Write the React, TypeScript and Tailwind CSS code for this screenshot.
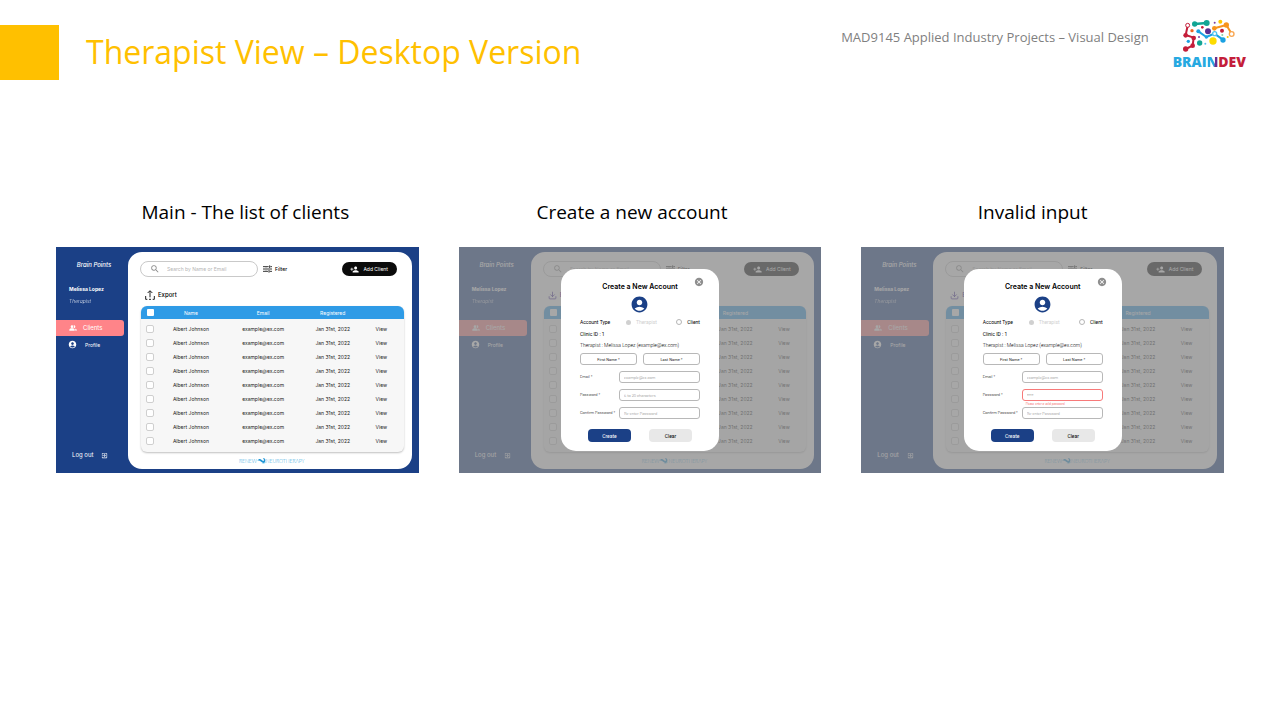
import { useId } from "react";
import {
  MdSearch,
  MdPeopleAlt,
  MdAccountCircle,
  MdExitToApp,
  MdPersonAddAlt1,
  MdCancel,
} from "react-icons/md";
import { LuDownload } from "react-icons/lu";

type ScreenKind = "main" | "create" | "invalid";

const clients = Array.from({ length: 9 }, (_, i) => ({
  id: i + 1,
  name: "Albert Johnson",
  email: "example@ex.com",
  registered: "Jan 31st, 2022",
}));

function BrainLogo() {
  return (
    <div className="mt-px flex flex-col items-center gap-0.5">
      <svg viewBox="0 0 156 102" className="h-[34px] w-[52px]" aria-hidden="true">
        <g fill="none" strokeLinecap="round" strokeLinejoin="round">
          <path d="M14 20 L8 48 L32 56 L29 80 L8 90" stroke="#c41e3a" strokeWidth="6" />
          <path d="M36 15 L70 12" stroke="#12a594" strokeWidth="7" />
          <path d="M94 28 L130 18 L146 44" stroke="#f7941e" strokeWidth="6" />
          <path d="M46 37 L70 54 L94 44 L120 62" stroke="#1ba1e2" strokeWidth="6" />
        </g>
        <circle cx="14" cy="19" r="6" fill="#fff" stroke="#c41e3a" strokeWidth="3" />
        <circle cx="8" cy="49" r="7" fill="#c41e3a" />
        <circle cx="32" cy="57" r="7" fill="#c41e3a" />
        <circle cx="29" cy="80" r="7" fill="#c41e3a" />
        <circle cx="8" cy="90" r="8" fill="#c41e3a" />
        <circle cx="35" cy="15" r="8" fill="#12a594" />
        <circle cx="71" cy="12" r="9" fill="#12a594" />
        <circle cx="94" cy="28" r="7" fill="#f7941e" />
        <circle cx="130" cy="18" r="8" fill="#f7941e" />
        <circle cx="146" cy="45" r="7" fill="#fff" stroke="#f9a650" strokeWidth="4" />
        <circle cx="46" cy="37" r="6" fill="#1ba1e2" />
        <circle cx="70" cy="54" r="5" fill="#1ba1e2" />
        <circle cx="95" cy="44" r="6" fill="#fff" stroke="#4ec3f0" strokeWidth="4" />
        <circle cx="120" cy="63" r="8" fill="#1ba1e2" />
        <circle cx="75" cy="37" r="9" fill="#592d91" />
        <circle cx="90" cy="66" r="11" fill="#fddc00" />
        <circle cx="112" cy="8" r="6" fill="#fdc700" />
        <circle cx="95" cy="11" r="3" fill="#7b3fa0" />
        <circle cx="117" cy="35" r="6" fill="#c41e3a" />
        <circle cx="58" cy="25" r="4" fill="#c41e3a" />
        <circle cx="27" cy="35" r="5" fill="#f26522" />
        <circle cx="16" cy="67" r="5" fill="#1ba1e2" />
        <circle cx="50" cy="72" r="8" fill="#12a594" />
        <circle cx="67" cy="74" r="3" fill="#4ec3f0" />
        <circle cx="48" cy="54" r="3" fill="#7b3fa0" />
        <circle cx="118" cy="48" r="3" fill="#8bd0a5" />
        <circle cx="134" cy="54" r="3" fill="#fdc700" />
      </svg>
      <div className="font-['Open_Sans',sans-serif] text-[14px] leading-[14px] font-extrabold whitespace-nowrap">
        <span className="text-[#27a9e1]">BRAI</span>
        <span className="bg-linear-to-r from-[#27a9e1] from-60% to-[#662d91] to-75% bg-clip-text text-transparent">
          N
        </span>
        <span className="text-[#c41e3a]">DEV</span>
      </div>
    </div>
  );
}

function FilterIcon() {
  return (
    <svg viewBox="0 0 27 24" className="h-2 w-[9px]" fill="none" stroke="currentColor" strokeWidth="2.4" aria-hidden="true">
      <path d="M0 5h17M22 5h5M20 1v8M0 12h6M12 12h15M9 8v8M0 19h15M20 19h7M18 15v8" />
    </svg>
  );
}

function ExportIcon() {
  return (
    <svg viewBox="0 0 30 30" className="h-[10px] w-[10px]" fill="none" stroke="currentColor" strokeWidth="2.6" aria-hidden="true">
      <path d="M15 22V3M8 9l7-7 7 7M2 18v10h5M28 18v10h-5M12 28h6" />
    </svg>
  );
}

function RenewLogo() {
  return (
    <div className="flex items-center justify-center pl-1 font-['Lato',sans-serif] text-[5px] leading-[6px] font-light text-[#2ba3dc]">
      <span>RENEW</span>
      <svg viewBox="0 0 30 21" className="h-[7px] w-[9px]" aria-hidden="true">
        <path d="M1 11C7 2 12 5 17 10c3 3 6 3 6-1 0-3-2-4-4-4 5-4 10 0 9 6-1 8-8 10-14 4-4-4-8-6-13-4z" fill="#2196d6" />
        <path d="M13 18c6 2 12 1 15-4v5c-4 2-11 2-15-1z" fill="#5cc3ee" />
      </svg>
      <span>NEUROTHERAPY</span>
    </div>
  );
}

function Sidebar() {
  return (
    <aside className="flex w-[72px] shrink-0 flex-col bg-[#1b4086] py-[14px] text-white">
      <p className="pl-1 text-center text-[6px] leading-[8px] font-medium italic">Brain Points</p>
      <div className="mt-4 pl-[13px]">
        <p className="text-[5px] leading-[8px] font-bold">Melissa Lopez</p>
        <p className="mt-1 text-[5px] leading-[8px] font-light italic opacity-80">Therapist</p>
      </div>
      <nav className="mt-[15px] mr-1 flex flex-col gap-1 text-[6px] leading-[8px]">
        <a href="#clients" className="flex h-4 items-center gap-[6px] rounded-r-[3px] bg-[#ff8489] pl-[13px]">
          <MdPeopleAlt className="size-2" />
          Clients
        </a>
        <a href="#profile" className="flex items-center gap-2 pl-3 text-[5px]">
          <MdAccountCircle className="size-[9px]" />
          Profile
        </a>
      </nav>
      <a href="#logout" className="mt-auto flex items-center gap-2 pl-4 text-[6px] leading-[8px]">
        Log out
        <MdExitToApp className="size-[7px]" />
      </a>
    </aside>
  );
}

function Tick({ label, header = false }: { label: string; header?: boolean }) {
  return (
    <input
      type="checkbox"
      aria-label={label}
      className={
        header
          ? "block size-[7px] appearance-none rounded-[1px] bg-white"
          : "block size-[8px] appearance-none rounded-[2px] border border-[#cfcfcf] bg-white"
      }
    />
  );
}

function ClientTable() {
  return (
    <div className="overflow-hidden rounded-[6px] bg-[#f7f7f7] pb-1 shadow-[0_1px_2px_rgba(0,0,0,0.25)]">
      <table className="w-full table-fixed border-collapse text-center text-[5px] leading-[6px] text-[#1c1c1c]">
        <thead>
          <tr className="h-[13px] bg-[#2f9be6] text-white">
            <th className="w-[8%] p-0 pl-[6px]">
              <Tick label="Select all clients" header />
            </th>
            <th className="w-[22%] p-0 font-normal">Name</th>
            <th className="w-[33%] p-0 font-normal">Email</th>
            <th className="w-[20%] p-0 font-normal">Registered</th>
            <th className="p-0" aria-label="Actions" />
          </tr>
        </thead>
        <tbody className="before:block before:h-[3px] before:content-['']">
          {clients.map((c) => (
            <tr key={c.id} className="h-[14px]">
              <td className="p-0 pl-[5px]">
                <Tick label={`Select client ${c.id}`} />
              </td>
              <td className="p-0">{c.name}</td>
              <td className="p-0">{c.email}</td>
              <td className="p-0">{c.registered}</td>
              <td className="p-0">
                <a href="#view">View</a>
              </td>
            </tr>
          ))}
        </tbody>
      </table>
    </div>
  );
}

function ClientArea({ download }: { download: boolean }) {
  return (
    <section className="mt-[5px] mr-[7px] mb-1 flex min-w-0 flex-1 flex-col rounded-[14px] bg-white px-2 pt-[9px] pb-[5px]">
      <div className="flex items-center pl-1">
        <label className="flex h-4 w-[118px] items-center rounded-full border border-[#c9c9c9] pl-[9px]">
          <MdSearch className="size-[10px] shrink-0 text-[#8a8a8a]" />
          <input
            type="search"
            aria-label="Search clients"
            placeholder="Search by Name or Email"
            className="ml-[7px] w-full min-w-0 bg-transparent text-[5px] leading-[6px] outline-none placeholder:text-[#b5b5b5]"
          />
        </label>
        <button type="button" className="ml-[5px] flex items-center gap-[3px] text-[5px] leading-[6px] font-medium">
          <FilterIcon />
          Filter
        </button>
        <button
          type="button"
          className="mr-[7px] ml-auto flex h-[14px] w-[55px] items-center justify-center gap-1 rounded-full bg-[#0b0b0b] text-[5px] leading-[6px] text-white"
        >
          <MdPersonAddAlt1 className="size-[9px] -scale-x-100" />
          Add Client
        </button>
      </div>
      <button
        type="button"
        className={`mt-[13px] ml-[9px] flex items-center gap-[3px] self-start text-[6px] leading-[10px] font-medium ${
          download ? "text-[#2a0a8c]" : "text-black"
        }`}
      >
        {download ? <LuDownload className="size-[9px]" /> : <ExportIcon />}
        Export
      </button>
      <div className="mt-[6px] pl-[5px]">
        <ClientTable />
      </div>
      <div className="mt-auto">
        <RenewLogo />
      </div>
    </section>
  );
}

const inputBox =
  "h-3 min-w-0 rounded-[3px] border bg-white text-[4px] leading-[6px] outline-none";

function AccountDialog({ invalid }: { invalid: boolean }) {
  const id = useId();
  return (
    <div className="absolute inset-0 flex items-center justify-center bg-[#8a8a8a]/75">
      <form
        role="dialog"
        aria-label="Create a New Account"
        className="relative w-[158px] rounded-[15px] bg-white px-[19px] pt-[13px] pb-[9px] font-['Roboto',sans-serif] text-[5px] leading-[6px] text-black"
      >
        <button type="button" aria-label="Close" className="absolute top-2 right-[15px]">
          <MdCancel className="size-[10px] text-[#8f8f8f]" />
        </button>
        <h3 className="text-center font-['Inter',sans-serif] text-[7px] leading-[10px] font-semibold">Create a New Account</h3>
        <MdAccountCircle className="mx-auto mt-[3px] size-[19px] text-[#1b4086]" />
        <div className="mt-[5px] flex items-center">
          <span className="w-[46px]">Account Type</span>
          <label className="flex flex-1 items-center gap-[5px] text-[#cfcfcf]">
            <input type="radio" name={`${id}-type`} disabled className="size-[5px] appearance-none rounded-full bg-[#d0d0d0]" />
            Therapist
          </label>
          <label className="flex items-center gap-[5px]">
            <input type="radio" name={`${id}-type`} className="size-[6px] appearance-none rounded-full border border-[#b5b5b5] bg-white" />
            Client
          </label>
        </div>
        <p className="mt-[6px]">Clinic ID : 1</p>
        <p className="mt-[5px] font-light">Therapist : Melissa Lopez (example@ex.com)</p>
        <div className="mt-[5px] grid grid-cols-2 gap-[6px]">
          <input aria-label="First Name" placeholder="First Name *" className={`${inputBox} border-[#b8b8b8] text-center placeholder:text-[#222]`} />
          <input aria-label="Last Name" placeholder="Last Name *" className={`${inputBox} border-[#b8b8b8] text-center placeholder:text-[#222]`} />
        </div>
        <div className="mt-[6px] flex flex-col gap-[6px] text-[4px] font-light">
          <div className="flex items-center">
            <label htmlFor={`${id}-email`} className="w-[39px]">Email *</label>
            <input id={`${id}-email`} type="email" placeholder="example@ex.com" className={`${inputBox} flex-1 border-[#b8b8b8] px-1 placeholder:text-[#8a8a8a]`} />
          </div>
          <div className="relative flex items-center">
            <label htmlFor={`${id}-password`} className="w-[39px]">Password *</label>
            <input
              id={`${id}-password`}
              type="password"
              placeholder={invalid ? "****" : "6 to 20 characters"}
              className={`${inputBox} flex-1 px-1 ${
                invalid ? "border-[#f77a7a] placeholder:text-[#555]" : "border-[#b8b8b8] placeholder:text-[#8a8a8a]"
              }`}
            />
            {invalid && (
              <p role="alert" className="absolute top-full left-[43px] text-[3px] leading-[6px] text-[#f03a3a]">
                Please enter a valid password
              </p>
            )}
          </div>
          <div className="flex items-center">
            <label htmlFor={`${id}-confirm`} className="w-[39px] whitespace-nowrap">Confirm Password *</label>
            <input id={`${id}-confirm`} type="password" placeholder="Re-enter Password" className={`${inputBox} flex-1 border-[#b8b8b8] px-1 placeholder:text-[#8a8a8a]`} />
          </div>
        </div>
        <div className="mt-[10px] flex justify-between px-[8px]">
          <button type="button" className="h-[13px] w-[43px] rounded-[4px] bg-[#1b4086] text-white">Create</button>
          <button type="button" className="h-[13px] w-[43px] rounded-[4px] bg-[#e8e8e8]">Clear</button>
        </div>
      </form>
    </div>
  );
}

function Screen({ kind }: { kind: ScreenKind }) {
  return (
    <div className="relative flex h-[226px] bg-[#1b4086] font-['Inter',sans-serif]">
      <Sidebar />
      <ClientArea download={kind !== "main"} />
      {kind !== "main" && <AccountDialog invalid={kind === "invalid"} />}
    </div>
  );
}

const screens: { kind: ScreenKind; title: string; indent: string }[] = [
  { kind: "main", title: "Main - The list of clients", indent: "pl-4" },
  { kind: "create", title: "Create a new account", indent: "pr-4" },
  { kind: "invalid", title: "Invalid input", indent: "pr-5" },
];

export default function App() {
  return (
    <div className="min-h-screen bg-white font-['Open_Sans',sans-serif]">
      <header className="flex items-start pt-[18px] pr-[34px]">
        <div className="mt-[7px] h-[55px] w-[59px] bg-[#ffc000]" />
        <h1 className="mt-[7px] ml-[27px] text-[32px] leading-[54px] text-[#ffc000]">
          Therapist View – Desktop Version
        </h1>
        <p className="mt-[9px] mr-6 ml-auto text-[13px] leading-5 text-[#7f7f7f]">
          MAD9145 Applied Industry Projects – Visual Design
        </p>
        <BrainLogo />
      </header>
      <main className="grid grid-cols-3 gap-10 px-14 pt-[119px]">
        {screens.map((s) => (
          <section key={s.kind}>
            <h2 className={`mb-[22px] text-center text-[19px] leading-[26px] text-black ${s.indent}`}>{s.title}</h2>
            <Screen kind={s.kind} />
          </section>
        ))}
      </main>
    </div>
  );
}
